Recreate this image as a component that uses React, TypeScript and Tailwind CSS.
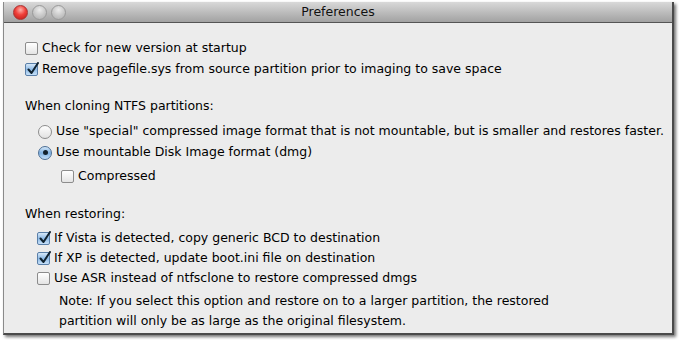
import React from 'react';

const font = { fontFamily: '"DejaVu Sans", "Lucida Grande", sans-serif' };

const Checkbox: React.FC<{ checked?: boolean }> = ({ checked }) => (
  <span
    className={
      'relative inline-block w-[13px] h-[13px] rounded-[2px] border shrink-0 ' +
      (checked
        ? 'border-[#5a7fa8] bg-gradient-to-b from-[#d6e8f8] via-[#8fbbe6] to-[#c6e0f8]'
        : 'border-[#8c8c8c] bg-gradient-to-b from-[#ffffff] via-[#f2f2f2] to-[#e4e4e4]')
    }
  >
    {checked && (
      <svg className="absolute left-[1px] top-[-2px]" width="12" height="13" viewBox="0 0 12 13">
        <path d="M1.5 7.5 L4.5 11 L11 1" fill="none" stroke="#10222f" strokeWidth="2" strokeLinecap="round" strokeLinejoin="round" />
      </svg>
    )}
  </span>
);

const Radio: React.FC<{ checked?: boolean }> = ({ checked }) => (
  <span
    className={
      'relative inline-flex items-center justify-center w-[14px] h-[14px] rounded-full border shrink-0 ' +
      (checked
        ? 'border-[#4d6f95] bg-gradient-to-b from-[#d2e6f8] via-[#7fb1e2] to-[#c4e0fa]'
        : 'border-[#8c8c8c] bg-gradient-to-b from-[#ffffff] via-[#f0f0f0] to-[#e2e2e2]')
    }
  >
    {checked && <span className="w-[5px] h-[5px] rounded-full bg-[#13222e]" />}
  </span>
);

const Row: React.FC<{ control: React.ReactNode; text: string; className?: string }> = ({ control, text, className }) => (
  <div className={'flex items-center gap-[4px] ' + (className ?? 'h-[21px]')}>
    {control}
    <span>{text}</span>
  </div>
);

const Light: React.FC<{ red?: boolean }> = ({ red }) => (
  <span
    className={
      'inline-block w-[15px] h-[15px] rounded-full border ' +
      (red
        ? 'border-[#a33] bg-[radial-gradient(circle_at_50%_30%,#ffb0a8_0%,#f0403a_45%,#b81b14_100%)]'
        : 'border-[#9a9a9a] bg-[radial-gradient(circle_at_50%_30%,#ececec_0%,#cacaca_50%,#adadad_100%)]')
    }
  />
);

export default function App() {
  return (
    <div className="w-[679px] h-[340px] bg-white text-[12.5px] text-black" style={font}>
      <div className="ml-[3px] mt-[2px] w-[671px] h-[333px] flex flex-col border-l border-l-[#8a8a8a] border-b-2 border-r-2 border-b-[#4a4a4a] border-r-[#4a4a4a] shadow-[2px_2px_3px_rgba(0,0,0,0.55)] bg-[#ececec]">
        <div className="relative h-[21px] shrink-0 flex items-center border-b border-[#555] bg-gradient-to-b from-[#d9d9d9] to-[#a2a2a2]">
          <div className="flex items-center gap-[4px] pl-[9px] pt-[1px]">
            <Light red />
            <Light />
            <Light />
          </div>
          <div className="absolute inset-0 flex items-center justify-center text-[12.5px] text-[#111]">Preferences</div>
        </div>

        <div className="flex flex-col pl-[21px] pt-[15px]">
          <Row control={<Checkbox />} text="Check for new version at startup" />
          <Row control={<Checkbox checked />} text="Remove pagefile.sys from source partition prior to imaging to save space" />

          <div className="mt-[16px] h-[21px] flex items-center">When cloning NTFS partitions:</div>
          <div className="flex flex-col pl-[13px] mt-[4px]">
            <Row control={<Radio />} text={'Use "special" compressed image format that is not mountable, but is smaller and restores faster.'} />
            <Row control={<Radio checked />} text="Use mountable Disk Image format (dmg)" />
            <Row control={<Checkbox />} text="Compressed" className="h-[21px] pl-[23px] mt-[3px]" />
          </div>

          <div className="mt-[17px] h-[21px] flex items-center">When restoring:</div>
          <div className="flex flex-col pl-[12px] mt-[3px]">
            <Row control={<Checkbox checked />} text="If Vista is detected, copy generic BCD to destination" className="h-[20px]" />
            <Row control={<Checkbox checked />} text="If XP is detected, update boot.ini file on destination" className="h-[20px]" />
            <Row control={<Checkbox />} text="Use ASR instead of ntfsclone to restore compressed dmgs" className="h-[20px]" />
            <div className="pl-[22px] mt-[3px] leading-[20px]">
              <div>Note: If you select this option and restore on to a larger partition, the restored</div>
              <div>partition will only be as large as the original filesystem.</div>
            </div>
          </div>
        </div>
      </div>
    </div>
  );
}
